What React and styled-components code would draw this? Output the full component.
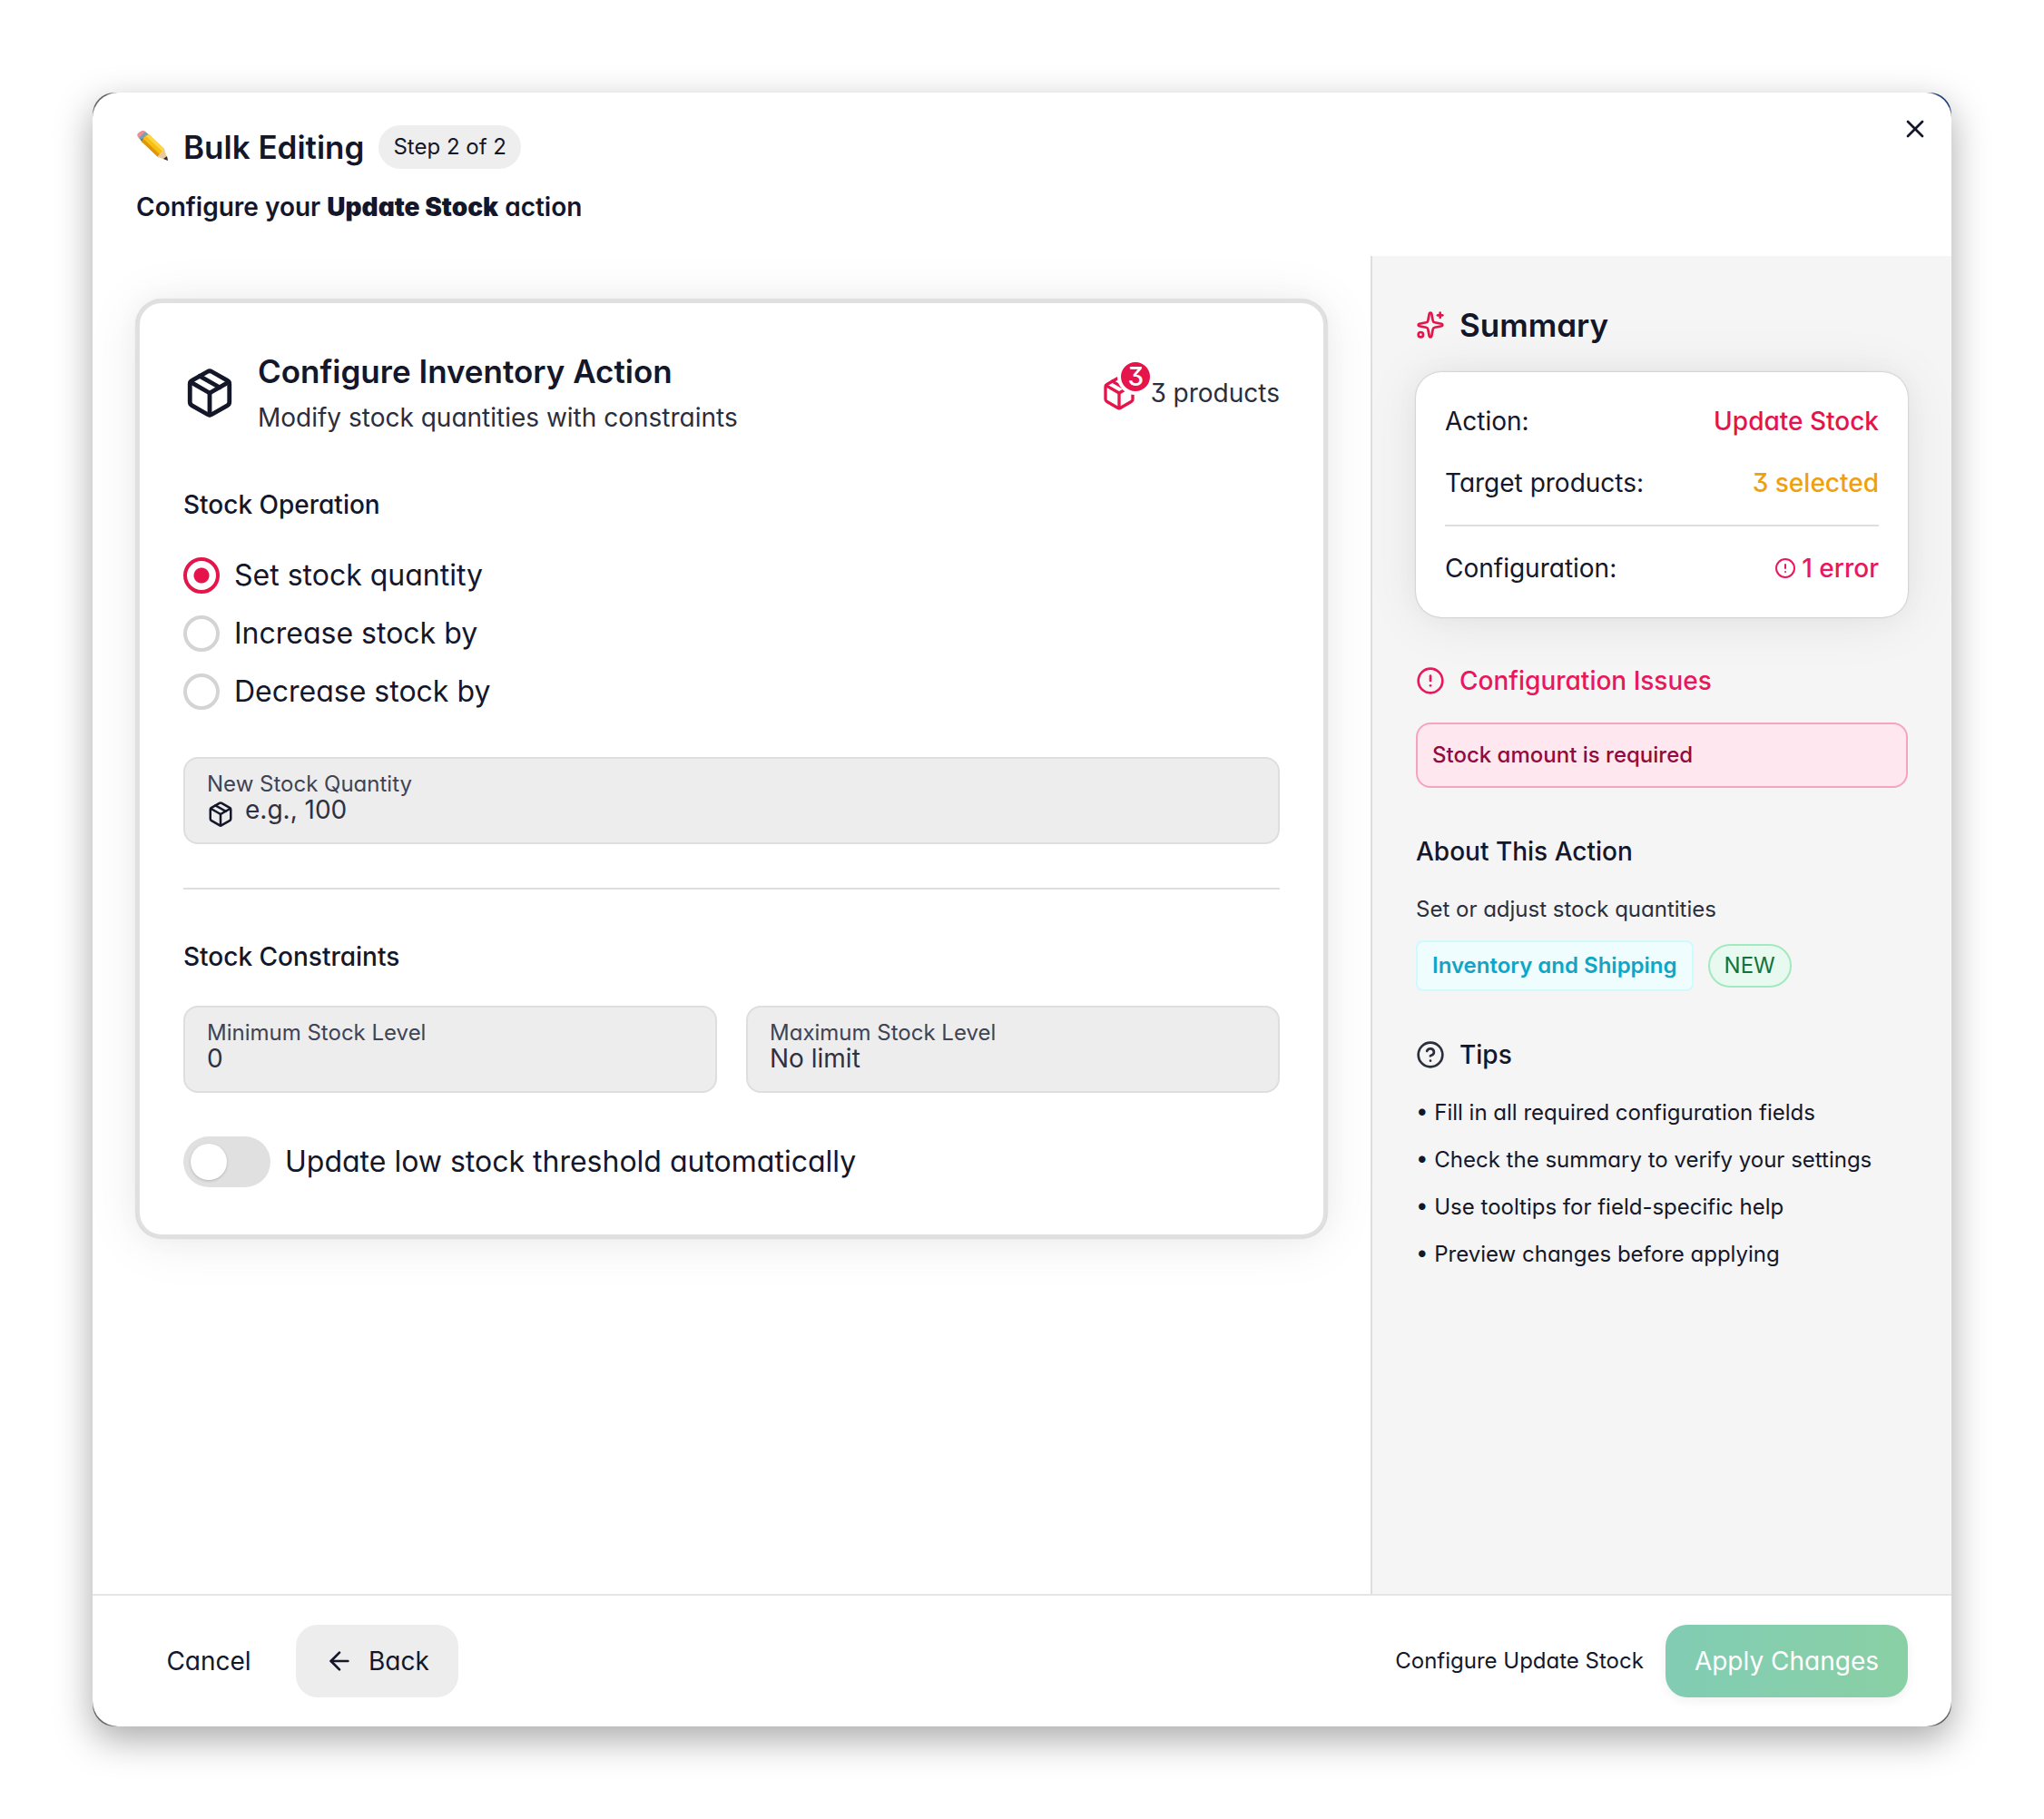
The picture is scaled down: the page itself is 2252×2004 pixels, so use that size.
import { useState } from "react"
import styled, { createGlobalStyle, css } from "styled-components"
import { ArrowLeft, CircleAlert, CircleQuestionMark, Package, Sparkles, X } from "lucide-react"

const GlobalStyle = createGlobalStyle`
    * { box-sizing: border-box; }
    body {
        margin: 0;
        background: #fff;
        color: #11181c;
        font-family: Inter, "Liberation Sans", sans-serif;
        font-feature-settings: "cv11", "cv09";
        -webkit-font-smoothing: antialiased;
    }
    button, input { font: inherit; color: inherit; font-feature-settings: inherit; }
    h1, h2, h3, p, ul, dl, dd { margin: 0; padding: 0; }
`;

const cardShadow = css`
box-shadow: 0 0 30px rgba(0, 0, 0, 0.03), 0 4px 60px rgba(0, 0, 0, 0.08), 0 0 2px rgba(0, 0, 0, 0.3);
`;

const Page = styled.div`
display: flex;
min-height: 100vh;
padding: 102px;
`;
const Frame = styled.div`
flex: 1;
display: flex;
border-radius: 24px;
background: radial-gradient(circle at top right, #1d3f7a 20px, #666 30px);
box-shadow: 0 14px 40px rgba(0, 0, 0, 0.34);
`;
const Modal = styled.section`
flex: 1;
display: flex;
flex-direction: column;
border-radius: 28px;
overflow: hidden;
background: #fff;
color: #14172a;
`;

const Header = styled.header`
display: flex;
align-items: flex-start;
justify-content: space-between;
padding: 24px 24px 32px 48px;
`;
const Heading = styled.div`
padding-top: 8px;
`;
const TitleRow = styled.div`
display: flex;
align-items: center;
gap: 16px;
margin-bottom: 16px;
`;
const Title = styled.h1`
display: flex;
align-items: center;
gap: 16px;
font-size: 35px;
line-height: 56px;
font-weight: 600;
`;
const StepChip = styled.span`
padding: 0 16px;
border-radius: 24px;
background: #eee;
font-size: 24px;
line-height: 48px;
`;
const Subtitle = styled.p`
font-size: 28px;
line-height: 44px;
font-weight: 600;
strong { font-weight: 900; }
`;
const CloseButton = styled.button`
display: flex;
padding: 0;
border: 0;
background: none;
cursor: pointer;
`;

const Body = styled.div`
flex: 1;
display: flex;
`;
const Main = styled.main`
flex: 1;
padding: 48px;
overflow: hidden;
`;
const ConfigCard = styled.div`
padding: 48px 48px 52px;
border: 4px solid #e0e0e0;
border-radius: 28px;
background: #fff;
${cardShadow}
`;
const CardHeader = styled.div`
display: flex;
align-items: center;
gap: 24px;
margin-bottom: 50px;
`;
const CardTitles = styled.div`
flex: 1;
`;
const CardTitle = styled.h2`
font-size: 35px;
line-height: 54px;
font-weight: 600;
`;
const CardText = styled.p`
font-size: 28px;
line-height: 48px;
color: #2b2e3c;
`;
const ProductCount = styled.div`
display: flex;
align-items: center;
gap: 14px;
font-size: 28px;
line-height: 44px;
color: #2b2e3c;
`;
const CountIcon = styled.span`
position: relative;
display: flex;
color: #e5144b;
`;
const CountBadge = styled.span`
position: absolute;
top: -18px;
right: -18px;
width: 40px;
height: 40px;
border: 4px solid #fff;
border-radius: 50%;
background: #e5144b;
color: #fff;
font-size: 28px;
line-height: 32px;
font-weight: 500;
text-align: center;
`;

const SectionLabel = styled.h3`
font-size: 28px;
line-height: 44px;
font-weight: 500;
`;
const RadioList = styled.div`
display: flex;
flex-direction: column;
gap: 16px;
margin: 32px 0 48px;
`;
const RadioLabel = styled.label`
display: flex;
align-items: center;
gap: 16px;
font-size: 32px;
line-height: 48px;
cursor: pointer;
`;
const Radio = styled.input`
appearance: none;
width: 40px;
height: 40px;
margin: 0;
border: 4px solid #d4d4d4;
border-radius: 50%;
background: #fff;
&:checked {
    border-color: #e5144b;
    background: radial-gradient(circle, #e5144b 8px, #fff 9px);
}
`;

const FieldBox = styled.label`
display: block;
height: 96px;
padding: 18px 24px;
border: 2px solid #dedede;
border-radius: 16px;
background: #ededed;
`;
const FieldName = styled.span`
display: block;
font-size: 24px;
line-height: 20px;
color: #3f4354;
`;
const FieldRow = styled.span`
display: flex;
gap: 12px;
`;
const FieldIcon = styled(Package)`
margin-top: 8px;
`;
const FieldInput = styled.input`
flex: 1;
min-width: 0;
height: 36px;
padding: 0;
border: 0;
outline: 0;
background: none;
font-size: 28px;
line-height: 36px;
&::placeholder {
    color: #2f3140;
    opacity: 1;
}
`;
const Divider = styled.hr`
height: 2px;
margin: ${props => props.$gap} 0;
border: 0;
background: #dedede;
`;
const FieldGrid = styled.div`
display: grid;
grid-template-columns: 1fr 1fr;
gap: 32px;
margin: 32px 0 48px;
`;
const SwitchLabel = styled.label`
display: flex;
align-items: center;
gap: 16px;
font-size: 32px;
line-height: 48px;
cursor: pointer;
`;
const Switch = styled.input`
appearance: none;
display: flex;
align-items: center;
width: 96px;
height: 56px;
margin: 0;
padding: 0 8px;
border-radius: 28px;
background: #e0e0e0;
&::before {
    content: "";
    width: 40px;
    height: 40px;
    border-radius: 50%;
    background: #fff;
    box-shadow: 0 1px 3px rgba(0, 0, 0, 0.2);
}
&:checked {
    justify-content: flex-end;
    background: #e5144b;
}
`;

const Sidebar = styled.aside`
display: flex;
flex-direction: column;
gap: 48px;
width: 640px;
padding: 48px;
border-left: 2px solid #dedede;
background: #f5f5f5;
`;
const Block = styled.section`
display: flex;
flex-direction: column;
gap: ${props => props.$gap || "24px"};
`;
const SummaryTitle = styled.h2`
display: flex;
align-items: center;
gap: 16px;
font-size: 35px;
line-height: 56px;
font-weight: 600;
svg { color: #e5144b; }
`;
const SideTitle = styled.h3`
display: flex;
align-items: center;
gap: 16px;
font-size: 28px;
line-height: 44px;
font-weight: 500;
color: ${props => props.$color || "inherit"};
`;
const SummaryCard = styled.dl`
padding: 32px;
border-radius: 28px;
background: #fff;
${cardShadow}
`;
const SummaryRow = styled.div`
display: flex;
justify-content: space-between;
font-size: 28px;
line-height: 44px;
& + & { margin-top: 24px; }
`;
const SummaryValue = styled.dd`
display: flex;
align-items: center;
gap: 6px;
font-weight: 500;
color: ${props => props.$color};
`;
const Issue = styled.p`
padding: 16px;
border: 2px solid #f5a3bf;
border-radius: 16px;
background: #fee7ef;
color: #920b3a;
font-size: 24px;
line-height: 36px;
font-weight: 500;
`;
const SideText = styled.p`
font-size: 24px;
line-height: 36px;
color: #2b2e3c;
`;
const Chips = styled.div`
display: flex;
align-items: center;
gap: 16px;
`;
const CategoryChip = styled.span`
padding: 8px 16px;
border: 2px solid #cffafe;
border-radius: 8px;
background: #f0fdff;
color: #0ea5c6;
font-size: 24px;
line-height: 36px;
font-weight: 600;
`;
const NewChip = styled.span`
padding: 0 16px;
border: 2px solid #a2e9c1;
border-radius: 24px;
background: #e8faf0;
color: #12733a;
font-size: 24px;
line-height: 44px;
`;
const TipList = styled.ul`
display: flex;
flex-direction: column;
gap: 16px;
list-style: none;
font-size: 24px;
line-height: 36px;
li::before { content: "• "; }
`;

const Footer = styled.footer`
display: flex;
align-items: center;
gap: 16px;
padding: 32px 48px;
border-top: 2px solid #e5e5e5;
`;
const Button = styled.button`
display: flex;
align-items: center;
justify-content: center;
gap: 16px;
min-width: 160px;
height: 80px;
padding: 0 32px;
border: 0;
border-radius: 24px;
background: ${props => props.$filled ? "#ededed" : "none"};
font-size: 28px;
cursor: pointer;
`;
const FooterNote = styled.span`
margin: 0 8px 0 auto;
font-size: 24px;
line-height: 36px;
`;
const ApplyButton = styled(Button)`
background: linear-gradient(to right, #81ccb4, #8ad0a5);
box-shadow: 0 4px 12px rgba(0, 0, 0, 0.06);
color: #fff;
`;

const operations = [
    { id: "set", label: "Set stock quantity" },
    { id: "increase", label: "Increase stock by" },
    { id: "decrease", label: "Decrease stock by" },
]

const tips = [
    "Fill in all required configuration fields",
    "Check the summary to verify your settings",
    "Use tooltips for field-specific help",
    "Preview changes before applying",
]

const Pencil = () => (
    <svg width="36" height="36" viewBox="0 0 36 36" aria-hidden="true">
        <path d="M2 7 Q0 4 3 2 Q7 -1 9 0 L12 4 L5 10 Z" fill="#ea8f94" />
        <path d="M3 8 L10 1 L15 5 L7 13 Z" fill="#7d9db0" />
        <path d="M5 10 L8 8 L10 10 L7 13 Z" fill="#4d6472" />
        <path d="M6 12 Q8 6 14 4 L31 20 L24 29 Z" fill="#f7bf12" />
        <path d="M6 12 L8 9 L26 26 L24 29 Z" fill="#df9707" />
        <path d="M11 6 L14 4 L31 20 L29 23 Z" fill="#fcd548" />
        <path d="M31 20 L35 33 L24 29 Q24 26 27 26 Q27 23 29 23 Q29 20 31 20 Z" fill="#ebc99b" />
        <path d="M34 28 L35 33 L30 31 Z" fill="#2e2e2e" />
    </svg>
)

const Field = ({ label, placeholder, icon }) => (
    <FieldBox>
        <FieldName>{label}</FieldName>
        <FieldRow>
            {icon && <FieldIcon size={30} />}
            <FieldInput type="text" inputMode="numeric" placeholder={placeholder} />
        </FieldRow>
    </FieldBox>
)

const App = () => {
    const [operation, setOperation] = useState("set")
    const [autoUpdate, setAutoUpdate] = useState(false)

    return (
        <Page>
            <GlobalStyle />
            <Frame>
                <Modal role="dialog" aria-label="Bulk Editing">
                    <Header>
                        <Heading>
                            <TitleRow>
                                <Title><Pencil />Bulk Editing</Title>
                                <StepChip>Step 2 of 2</StepChip>
                            </TitleRow>
                            <Subtitle>Configure your <strong>Update Stock</strong> action</Subtitle>
                        </Heading>
                        <CloseButton aria-label="Close"><X size={32} /></CloseButton>
                    </Header>

                    <Body>
                        <Main>
                            <ConfigCard>
                                <CardHeader>
                                    <Package size={58} />
                                    <CardTitles>
                                        <CardTitle>Configure Inventory Action</CardTitle>
                                        <CardText>Modify stock quantities with constraints</CardText>
                                    </CardTitles>
                                    <ProductCount>
                                        <CountIcon>
                                            <Package size={40} />
                                            <CountBadge>3</CountBadge>
                                        </CountIcon>
                                        3 products
                                    </ProductCount>
                                </CardHeader>

                                <SectionLabel id="operation-label">Stock Operation</SectionLabel>
                                <RadioList role="radiogroup" aria-labelledby="operation-label">
                                    {operations.map((item) => (
                                        <RadioLabel key={item.id}>
                                            <Radio
                                                type="radio"
                                                name="operation"
                                                checked={operation === item.id}
                                                onChange={() => setOperation(item.id)}
                                            />
                                            {item.label}
                                        </RadioLabel>
                                    ))}
                                </RadioList>
                                <Field label="New Stock Quantity" placeholder="e.g., 100" icon />

                                <Divider $gap="48px 0 52px" />

                                <SectionLabel>Stock Constraints</SectionLabel>
                                <FieldGrid>
                                    <Field label="Minimum Stock Level" placeholder="0" />
                                    <Field label="Maximum Stock Level" placeholder="No limit" />
                                </FieldGrid>
                                <SwitchLabel>
                                    <Switch
                                        type="checkbox"
                                        role="switch"
                                        checked={autoUpdate}
                                        onChange={() => setAutoUpdate(!autoUpdate)}
                                    />
                                    Update low stock threshold automatically
                                </SwitchLabel>
                            </ConfigCard>
                        </Main>

                        <Sidebar>
                            <Block>
                                <SummaryTitle><Sparkles size={32} />Summary</SummaryTitle>
                                <SummaryCard>
                                    <SummaryRow>
                                        <dt>Action:</dt>
                                        <SummaryValue $color="#e5144b">Update Stock</SummaryValue>
                                    </SummaryRow>
                                    <SummaryRow>
                                        <dt>Target products:</dt>
                                        <SummaryValue $color="#f0a00f">3 selected</SummaryValue>
                                    </SummaryRow>
                                    <Divider $gap="24px" />
                                    <SummaryRow>
                                        <dt>Configuration:</dt>
                                        <SummaryValue $color="#e9175c"><CircleAlert size={24} />1 error</SummaryValue>
                                    </SummaryRow>
                                </SummaryCard>
                            </Block>

                            <Block>
                                <SideTitle $color="#e9175c"><CircleAlert size={32} />Configuration Issues</SideTitle>
                                <Issue>Stock amount is required</Issue>
                            </Block>

                            <Block $gap="16px">
                                <Block>
                                    <SideTitle>About This Action</SideTitle>
                                    <SideText>Set or adjust stock quantities</SideText>
                                </Block>
                                <Chips>
                                    <CategoryChip>Inventory and Shipping</CategoryChip>
                                    <NewChip>NEW</NewChip>
                                </Chips>
                            </Block>

                            <Block>
                                <SideTitle><CircleQuestionMark size={32} color="#2b2e3c" />Tips</SideTitle>
                                <TipList>
                                    {tips.map((tip) => <li key={tip}>{tip}</li>)}
                                </TipList>
                            </Block>
                        </Sidebar>
                    </Body>

                    <Footer>
                        <Button>Cancel</Button>
                        <Button $filled><ArrowLeft size={32} />Back</Button>
                        <FooterNote>Configure Update Stock</FooterNote>
                        <ApplyButton>Apply Changes</ApplyButton>
                    </Footer>
                </Modal>
            </Frame>
        </Page>
    )
}

export default App
